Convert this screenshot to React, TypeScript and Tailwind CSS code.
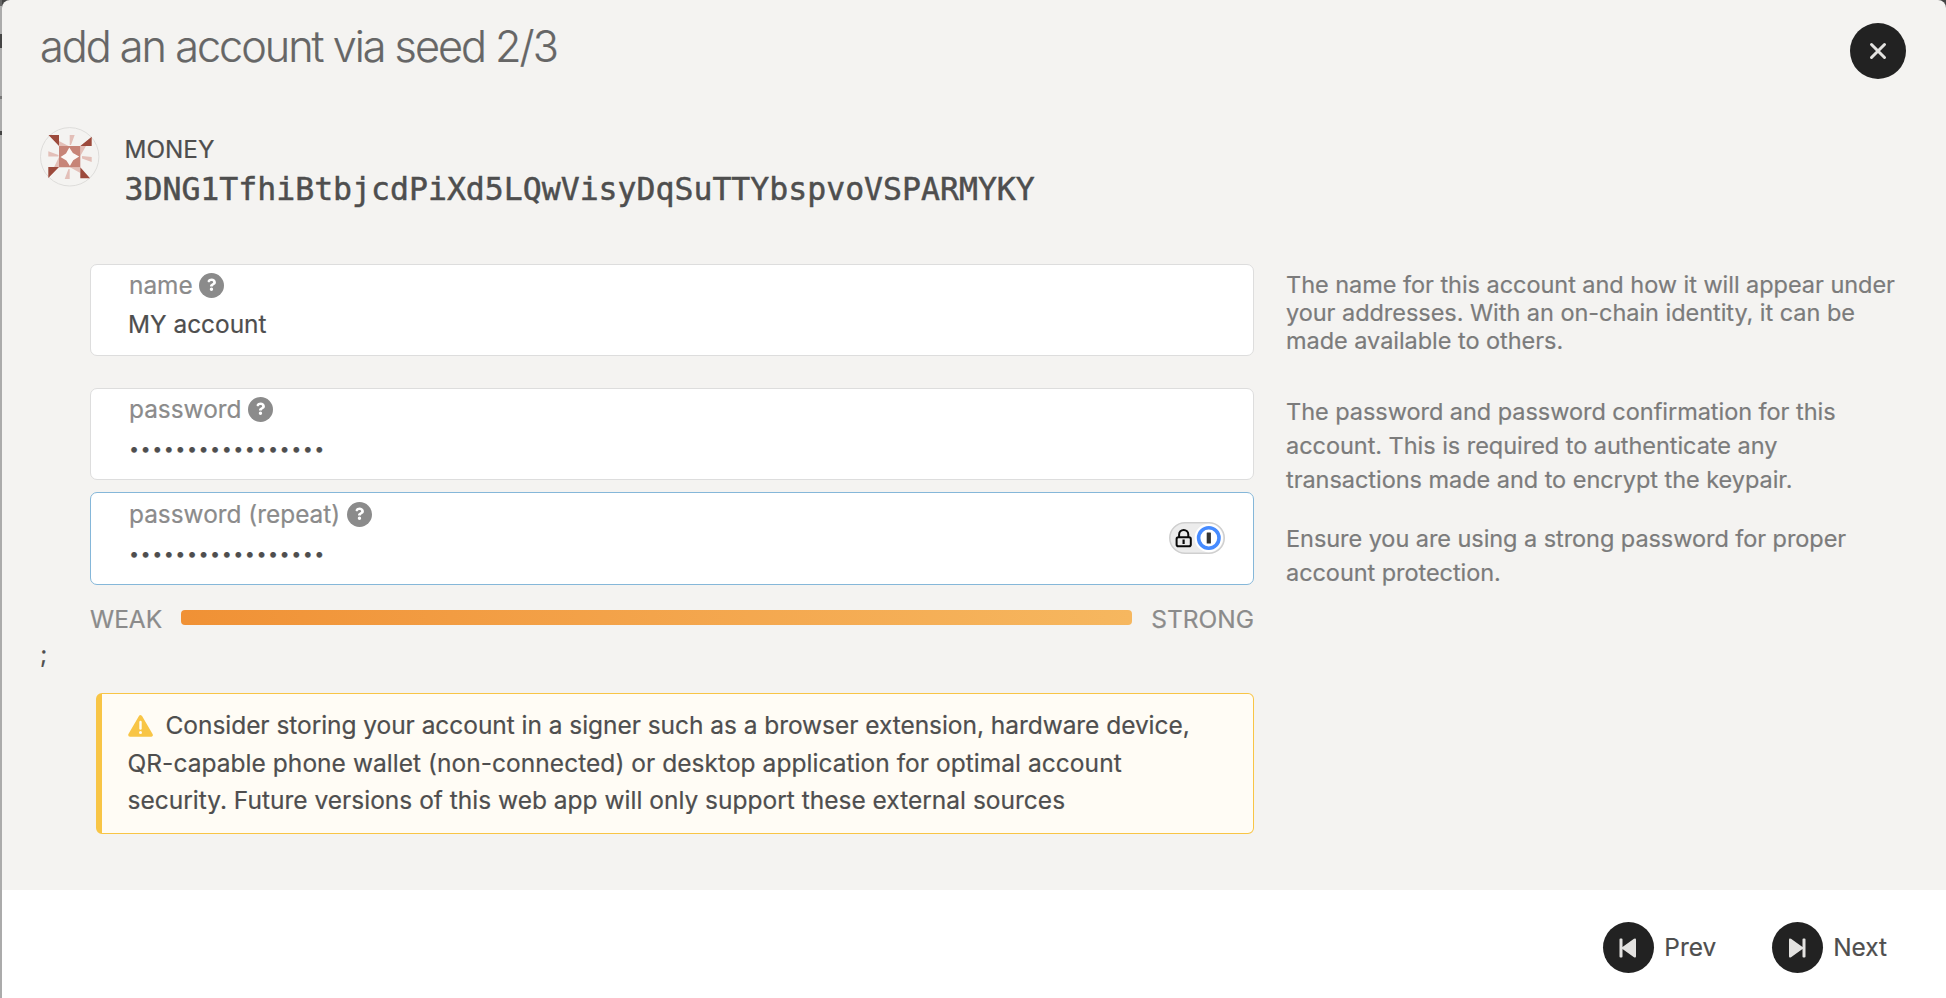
import type { ReactNode } from "react";

function Help() {
  return (
    <svg className="h-[25px] w-[25px] shrink-0" viewBox="0 0 512 512">
      <circle cx="256" cy="256" r="256" fill="#8b8b8b" />
      <path
        transform="translate(66 48) scale(0.740)"
        fill="#fff"
        d="M262.655 90c-54.497 0-89.255 22.957-116.549 63.758-3.536 5.286-2.353 12.415 2.715 16.258l34.699 26.310c5.205 3.947 12.621 3.008 16.665-2.122 17.864-22.658 30.113-35.797 57.303-35.797 20.429 0 45.698 13.148 45.698 32.958 0 14.976-12.363 22.667-32.534 33.976C247.128 238.528 216 254.941 216 296v4c0 6.627 5.373 12 12 12h56c6.627 0 12-5.373 12-12v-1.333c0-28.462 83.186-29.647 83.186-106.667 0-58.002-60.165-102-116.531-102zM256 338c-25.365 0-46 20.635-46 46 0 25.364 20.635 46 46 46s46-20.636 46-46c0-25.364-20.635-46-46-46z"
      />
    </svg>
  );
}

type FieldProps = { label: string; className: string; badge?: ReactNode; children: ReactNode };

function Field({ label, className, badge, children }: FieldProps) {
  return (
    <div className={"flex w-[1164px] items-center justify-between rounded-[7px] border bg-white pl-[38px] pr-[28px] " + className}>
      <div className="flex h-full flex-col">
        <div className="flex h-[32px] items-center gap-[6.500px] text-[24.400px] leading-[32px] text-[#8b8b8b]">
          <span>{label}</span>
          <Help />
        </div>
        {children}
      </div>
      {badge}
    </div>
  );
}

function Dots() {
  return <div className="mt-[8px] text-[18px] leading-[32px] tracking-[1.460px] text-[#4e4e4e]">•••••••••••••••••</div>;
}

function ManagerBadge() {
  return (
    <svg className="mb-[6px] h-[32px] w-[56px]" viewBox="0 0 56 32">
      <rect x="0.75" y="0.75" width="54.5" height="30.5" rx="15.25" fill="#ececec" stroke="#cfcfcf" strokeWidth="1.5" />
      <circle cx="39.8" cy="16" r="14.2" fill="#fff" />
      <circle cx="39.8" cy="16" r="10.2" fill="none" stroke="#468bff" strokeWidth="3.6" />
      <rect x="37.7" y="10.5" width="4.2" height="11" rx="0.5" fill="#333" />
      <rect x="7.6" y="15.3" width="14.2" height="8.900" rx="1.8" fill="none" stroke="#0a0a0a" strokeWidth="2" />
      <path d="M10.100 15.3v-2.800a4.6 4.6 0 0 1 9.200 0v2.800" fill="none" stroke="#0a0a0a" strokeWidth="2" />
      <path d="M14.600 17.500v4.500" stroke="#0a0a0a" strokeWidth="2.200" />
    </svg>
  );
}

function Identicon() {
  return (
    <svg className="mt-[127px] h-[60px] w-[60px] shrink-0" viewBox="0 0 60 60">
      <circle cx="29.700" cy="29.800" r="29.200" fill="#f4f3f1" stroke="#dddcda" strokeWidth="1" />
      <g fill="#e3bfb8">
        <path d="M19 14l9.500 5H19zM40.300 19H46l-5.700 10zM30 40.300h10.300v5.700zM19 30v10.300h-5z" />
        <path d="M29.700 8h5l-3.700 10h-1.300zM51.700 30v5L42 31.500v-2.500zM29.700 52h-5l3.800-10h1.200zM8.300 24.300l10.200 3.700v1.500H8.300z" />
      </g>
      <path d="M19 19h21.300v21.300H19z" fill="#c78478" />
      <path d="M29.300 20.500l3.600 5.600 6.300 3.400-6 3.700-3.300 5.800-3.500-5.600-5.900-3.400 5.500-3.500z" fill="#fbf8f7" />
      <path d="M8.500 8H19v11zM51.700 9.700V19H40.300zM40.300 40.300L50 51.300h-9.700zM8.300 40H19L8.300 51z" fill="#9c4a3c" />
    </svg>
  );
}

export default function App() {
  return (
    <div className="flex h-[998px] w-[1946px] bg-[#444444] font-['Inter',sans-serif] text-[#4e4e4e] [-webkit-text-stroke:0.200px]">
      <div className="flex w-[2px] shrink-0 flex-col bg-[#ababab]">
        <div className="h-[6px] bg-[#666666]" />
        <div className="h-[28px]" />
        <div className="h-[14px] bg-[#444444]" />
        <div className="h-[48px]" />
        <div className="h-[3px] bg-[#777777]" />
        <div className="h-[32px]" />
        <div className="h-[4px] bg-[#444444]" />
      </div>
      <main className="flex w-[1944px] flex-col overflow-hidden rounded-t-[8px] bg-[#f4f3f1]">
        <header className="flex h-[104px] shrink-0 items-start justify-between pl-[38px] pr-[40px]">
          <h1 className="mt-[18px] whitespace-nowrap text-[43.200px] leading-[56px] font-light tracking-[-2px] text-[#666666]">
            add an account via seed 2/3
          </h1>
          <button className="mt-[23px] flex h-[56px] w-[56px] items-center justify-center rounded-full bg-[#222222]">
            <svg className="h-[18px] w-[18px]" viewBox="0 0 18 18">
              <path d="M2.500 2.500l13 13M15.500 2.500l-13 13" stroke="#e3e2e0" strokeWidth="3" strokeLinecap="round" />
            </svg>
          </button>
        </header>

        <section className="-mt-[104px] flex h-[264px] shrink-0 pl-[38px]">
          <Identicon />
          <div className="ml-[24.500px] flex flex-col pt-[134px] whitespace-nowrap">
            <div className="text-[24.300px] leading-[30px]">MONEY</div>
            <div className="mt-[4px] font-['DejaVu_Sans_Mono',monospace] text-[31.500px] leading-[42px] [-webkit-text-stroke:0.500px]">
              3DNG1TfhiBtbjcdPiXd5LQwVisyDqSuTTYbspvoVSPARMYKY
            </div>
          </div>
        </section>

        <section className="flex h-[378px] shrink-0 gap-[32px] pl-[88px] whitespace-nowrap">
          <div className="flex w-[1164px] flex-col">
            <Field label="name" className="h-[92px] border-[#dddddd] pt-[4px]">
              <div className="mt-[6px] -ml-px text-[24.400px] leading-[34px]">MY account</div>
            </Field>
            <Field label="password" className="mt-[32px] h-[92px] border-[#dddddd] pt-[4px]">
              <Dots />
            </Field>
            <Field label="password (repeat)" className="mt-[12px] h-[93px] border-[#85b7d9] pt-[5px]" badge={<ManagerBadge />}>
              <Dots />
            </Field>
            <div className="mt-[18px] flex h-[32px] items-center justify-between text-[24.500px] leading-[32px] text-[#8b8b8b]">
              <span>WEAK</span>
              <div className="mb-[3px] h-[15px] w-[951px] rounded-[4px] bg-linear-to-r from-[#f09135] to-[#f6b75f]" />
              <span>STRONG</span>
            </div>
          </div>
          <div className="flex flex-col text-[23.500px] text-[#7b7b7b]">
            <p className="mt-[7px] leading-[28px] tracking-[-0.040px]">
              The name for this account and how it will appear under<br />
              your addresses. With an on-chain identity, it can be<br />
              made available to others.
            </p>
            <p className="mt-[40px] leading-[34px] tracking-[-0.040px]">
              The password and password confirmation for this<br />
              account. This is required to authenticate any<br />
              transactions made and to encrypt the keypair.
            </p>
            <p className="mt-[25px] leading-[34px] tracking-[-0.060px]">
              Ensure you are using a strong password for proper<br />
              account protection.
            </p>
          </div>
        </section>

        <div className="-mt-[2px] h-[53px] shrink-0 pl-[38px] text-[24px] leading-[30px]">;</div>

        <section className="ml-[94px] h-[141px] w-[1158px] shrink-0 rounded-[6px] border border-l-[6px] border-[#f8c546] bg-[#fffcf5] pt-[13px] pl-[25.500px] text-[24.500px] leading-[37.700px] whitespace-nowrap">
          <div className="flex items-center tracking-[-0.050px]">
            <svg className="mr-[13px] h-[22px] w-[25px]" viewBox="0 0 25 22">
              <path d="M12.500 2L23 20H2z" fill="#f8c546" stroke="#f8c546" strokeWidth="3.600" strokeLinejoin="round" />
              <path d="M12.500 7v6.500" stroke="#fffcf5" strokeWidth="2.400" strokeLinecap="round" />
              <circle cx="12.500" cy="17.500" r="1.500" fill="#fffcf5" />
            </svg>
            Consider storing your account in a signer such as a browser extension, hardware device,
          </div>
          <div className="tracking-[0.040px]">QR-capable phone wallet (non-connected) or desktop application for optimal account</div>
          <div>security. Future versions of this web app will only support these external sources</div>
        </section>

        <footer className="mt-auto flex h-[108px] shrink-0 items-center justify-end bg-white pt-[7px] pr-[59px] text-[24.400px]">
          <button className="flex items-center gap-[10.500px]">
            <span className="flex h-[51px] w-[51px] items-center justify-center rounded-full bg-[#222222]">
              <svg className="h-[20px] w-[18px]" viewBox="0 0 18 20" fill="#e3e2e0">
                <path d="M1.500 .500h1a1 1 0 0 1 1 1v7.500L15 .800q2-1 2 1v16.400q0 2-2 1L3.500 11v7.500a1 1 0 0 1-1 1h-1a1 1 0 0 1-1-1v-17a1 1 0 0 1 1-1z" />
              </svg>
            </span>
            Prev
          </button>
          <button className="ml-[55.500px] flex items-center gap-[10.500px]">
            <span className="flex h-[51px] w-[51px] items-center justify-center rounded-full bg-[#222222]">
              <svg className="h-[20px] w-[18px]" viewBox="0 0 18 20" fill="#e3e2e0">
                <path d="M16.500 .500h-1a1 1 0 0 0-1 1v7.500L3 .800q-2-1-2 1v16.400q0 2 2 1L14.500 11v7.500a1 1 0 0 0 1 1h1a1 1 0 0 0 1-1v-17a1 1 0 0 0-1-1z" />
              </svg>
            </span>
            Next
          </button>
        </footer>
      </main>
    </div>
  );
}
